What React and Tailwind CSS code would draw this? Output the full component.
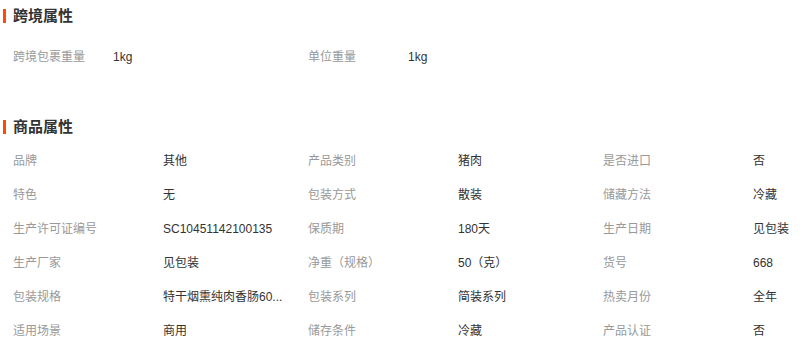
const CROSS_BORDER = [
  { label: '跨境包裹重量', value: '1kg' },
  { label: '单位重量', value: '1kg' },
]

const PRODUCT_ATTRS = [
  { label: '品牌', value: '其他' },
  { label: '产品类别', value: '猪肉' },
  { label: '是否进口', value: '否' },
  { label: '特色', value: '无' },
  { label: '包装方式', value: '散装' },
  { label: '储藏方法', value: '冷藏' },
  { label: '生产许可证编号', value: 'SC10451142100135' },
  { label: '保质期', value: '180天' },
  { label: '生产日期', value: '见包装' },
  { label: '生产厂家', value: '见包装' },
  { label: '净重（规格）', value: '50（克）' },
  { label: '货号', value: '668' },
  { label: '包装规格', value: '特干烟熏纯肉香肠60...' },
  { label: '包装系列', value: '简装系列' },
  { label: '热卖月份', value: '全年' },
  { label: '适用场景', value: '商用' },
  { label: '储存条件', value: '冷藏' },
  { label: '产品认证', value: '否' },
]

function SectionTitle({ children }) {
  return (
    <div className="flex h-[32px] items-center">
      <span className="ml-[3px] h-[14px] w-[3px] bg-[#ff4a00]" />
      <h2 className="ml-[7px] text-[15px] font-bold text-[#333]">{children}</h2>
    </div>
  )
}

export default function App() {
  return (
    <div
      className="h-[354px] w-[804px] overflow-hidden bg-white text-[12px]"
      style={{ fontFamily: '"Liberation Sans", "Noto Sans CJK SC", sans-serif' }}
    >
      <SectionTitle>跨境属性</SectionTitle>
      <div className="mt-[8px] flex pl-[13px]">
        {CROSS_BORDER.map((item) => (
          <div key={item.label} className="flex h-[34px] w-[295px] items-center">
            <span className="w-[100px] text-[#999]">{item.label}</span>
            <span className="text-[#333]">{item.value}</span>
          </div>
        ))}
      </div>

      <div className="mt-[37px]">
        <SectionTitle>商品属性</SectionTitle>
      </div>
      <div className="mt-px grid grid-cols-[295px_295px_201px] pl-[13px]">
        {PRODUCT_ATTRS.map((item) => (
          <div key={item.label} className="flex h-[34px] items-center">
            <span className="w-[150px] shrink-0 text-[#999]">{item.label}</span>
            <span className="whitespace-nowrap text-[#333]">{item.value}</span>
          </div>
        ))}
      </div>
    </div>
  )
}
